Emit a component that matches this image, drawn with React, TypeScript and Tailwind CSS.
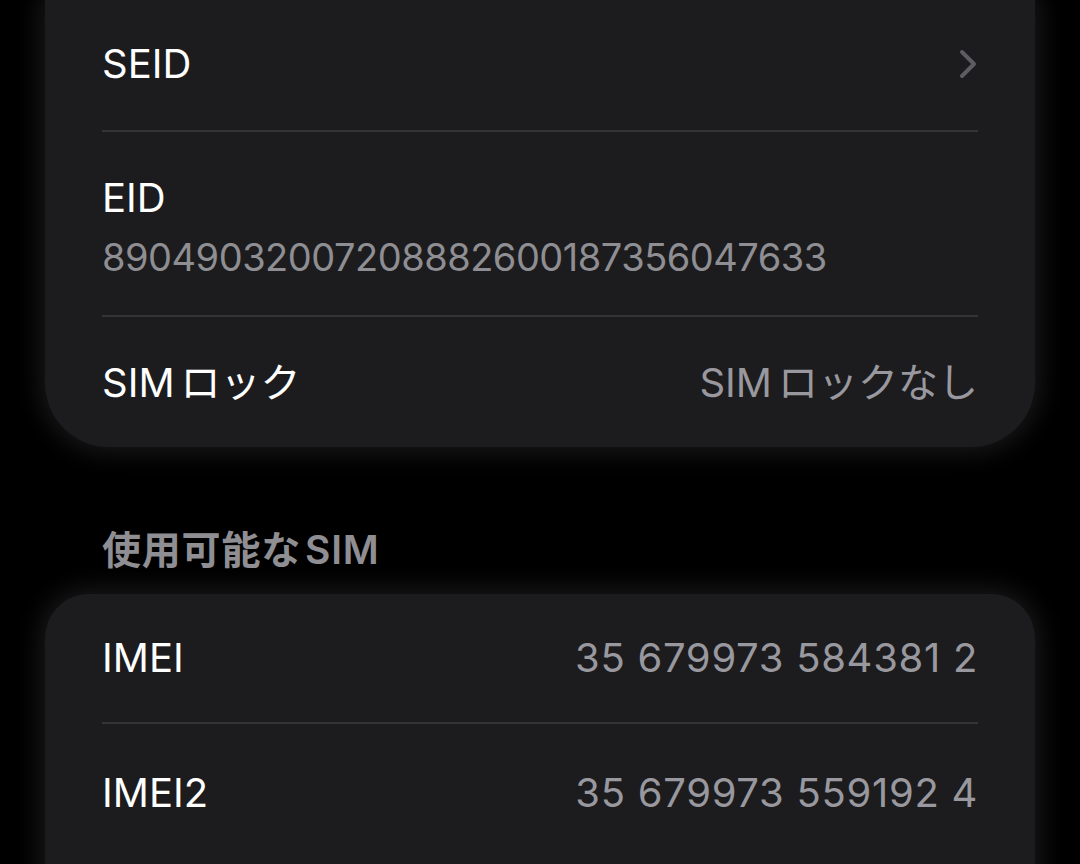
import React from "react";

const font = { fontFamily: '"Inter", "Noto Sans CJK JP", sans-serif' };

function Divider() {
  return <div className="h-[2px] bg-[#333336] ml-[57px] mr-[57px]" />;
}

function Chevron() {
  return (
    <svg width="20" height="30" viewBox="0 0 20 30" fill="none">
      <path d="M4 3 L16 15 L4 27" stroke="#5c5c61" strokeWidth="4" strokeLinecap="round" strokeLinejoin="round" />
    </svg>
  );
}

function SimLock({ suffix }: { suffix?: string }) {
  return (
    <>
      SIM<span className="ml-[6px]">ロック{suffix}</span>
    </>
  );
}

export default function App() {
  return (
    <div className="w-[1080px] h-[864px] bg-black overflow-hidden" style={font}>
      <div className="mx-[45px] bg-[#1c1c1e] rounded-b-[64px] shadow-[0_0_24px_6px_rgba(28,28,30,0.85)]">
        <div className="h-[130px] flex items-center justify-between px-[57px] pb-[2px]">
          <span className="text-[40px] leading-[48px] text-white">SEID</span>
          <Chevron />
        </div>
        <Divider />
        <div className="h-[183px] flex flex-col px-[57px] pt-[42px]">
          <span className="text-[40px] text-white leading-[48px]">EID</span>
          <span className="text-[38px] text-[#8e8e93] leading-[48px] mt-[11px] tracking-[-0.5px]">89049032007208882600187356047633</span>
        </div>
        <Divider />
        <div className="h-[130px] flex items-center justify-between px-[57px] pt-[2px]">
          <span className="text-[40px] leading-[48px] text-white"><SimLock /></span>
          <span className="text-[40px] leading-[48px] text-[#98989e]"><SimLock suffix="なし" /></span>
        </div>
      </div>

      <div className="px-[102px] mt-[73px] h-[60px] flex items-center">
        <span className="text-[39px] leading-[48px] font-semibold text-[#8e8e93] tracking-[0.8px]">
          使用可能な<span className="ml-[4px]">SIM</span>
        </span>
      </div>

      <div className="mx-[45px] mt-[14px] bg-[#1c1c1e] rounded-t-[44px] h-[300px] shadow-[0_0_24px_6px_rgba(28,28,30,0.85)]">
        <div className="h-[128px] flex items-center justify-between px-[57px]">
          <span className="text-[40px] leading-[48px] text-white">IMEI</span>
          <span className="text-[40px] leading-[48px] text-[#98989e] tracking-[0.7px]">35 679973 584381 2</span>
        </div>
        <Divider />
        <div className="h-[138px] flex items-center justify-between px-[57px]">
          <span className="text-[40px] leading-[48px] text-white">IMEI2</span>
          <span className="text-[40px] leading-[48px] text-[#98989e] tracking-[0.7px]">35 679973 559192 4</span>
        </div>
      </div>
    </div>
  );
}
